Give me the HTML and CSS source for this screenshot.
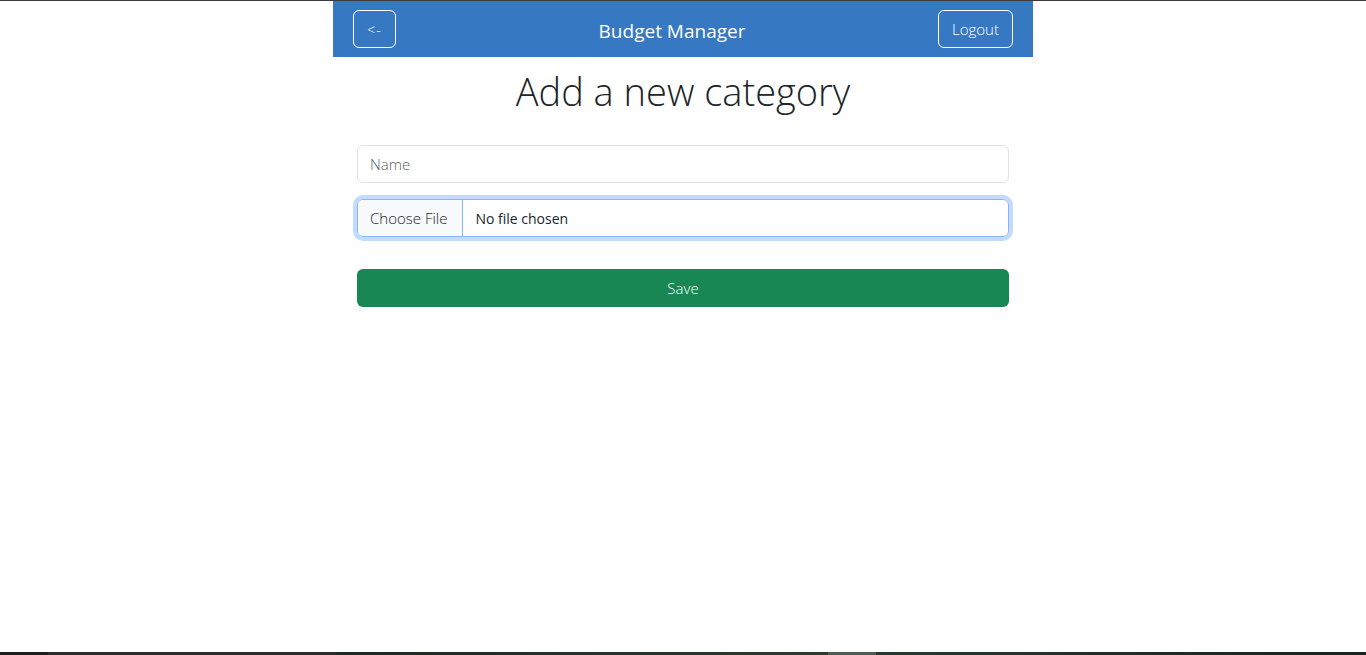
FILE: index.html
```html
<!DOCTYPE html>
<html lang="en">
<head>
<meta charset="utf-8">
<title>Budget Manager</title>
<link rel="stylesheet" href="styles.css">
</head>
<body>
<div class="screen">
  <div class="app">
    <header class="navbar">
      <button class="nav-btn back">&lt;-</button>
      <span class="brand">Budget Manager</span>
      <button class="nav-btn">Logout</button>
    </header>
    <h1 class="title">Add a new category</h1>
    <form class="form">
      <div class="field">
        <span class="placeholder">Name</span>
      </div>
      <div class="field file focused">
        <span class="file-btn">Choose File</span>
        <span class="file-name">No file chosen</span>
      </div>
      <button type="button" class="save">Save</button>
    </form>
  </div>
</div>
<div class="taskbar">
  <span class="tb-a"></span><span class="tb-b"></span><span class="tb-c"></span><span class="tb-d"></span><span class="tb-e"></span>
</div>
</body>
</html>
```
FILE: styles.css
```css
* { box-sizing: border-box; }
html, body { margin: 0; padding: 0; }
body {
  font-family: "Open Sans", "Noto Sans", sans-serif;
  background: #fff;
  color: #212529;
  border-top: 1px solid #3c3c3c;
}
.screen { height: 651px; }
.app {
  width: 700px;
  margin: 0 auto;
}
.navbar {
  height: 56px;
  background: #3778c2;
  display: flex;
  align-items: center;
  justify-content: space-between;
  padding: 0 20px;
}
.nav-btn {
  height: 38px;
  background: transparent;
  border: 1px solid #fff;
  border-radius: 6px;
  color: #fff;
  font-family: "Open Sans", sans-serif;
  font-weight: 300;
  font-size: 15px;
  padding: 0 13px;
}
.nav-btn.back { width: 43px; padding: 0; font-size: 14px; letter-spacing: 1px; }
.brand {
  color: #fff;
  font-size: 19px;
  font-weight: 400;
  margin-left: 10px;
  padding-top: 4px;
}
.title {
  margin: 10px 0 0;
  text-align: center;
  font-size: 38px;
  font-weight: 300;
  line-height: 48px;
  color: #212529;
}
.form {
  padding: 0 24px;
  margin-top: 30px;
  display: flex;
  flex-direction: column;
}
.field {
  height: 38px;
  border: 1px solid #dee2e6;
  border-radius: 6px;
  display: flex;
  align-items: center;
  font-size: 15px;
  font-weight: 300;
}
.placeholder { padding-left: 12px; color: #595c5f; }
.field.file { margin-top: 16px; }
.field.focused {
  border-color: #86b7fe;
  box-shadow: 0 0 0 4px rgba(13, 110, 253, 0.25);
}
.file-btn {
  height: 100%;
  display: flex;
  align-items: center;
  padding: 0 15px 0 12px;
  background: #f8f9fa;
  border-right: 1px solid #86b7fe;
  border-radius: 5px 0 0 5px;
  color: #212529;
}
.file-name { padding-left: 12px; color: #212529; font-weight: 400; font-size: 14px; }
.save {
  margin-top: 32px;
  height: 38px;
  background: #198754;
  border: none;
  border-radius: 6px;
  color: #fff;
  font-family: "Open Sans", sans-serif;
  font-weight: 300;
  font-size: 15px;
}
.taskbar {
  height: 3px;
  display: flex;
}
.taskbar span { height: 3px; }
.tb-a { width: 48px; background: #1e1e1e; }
.tb-b { width: 288px; background: #2e2d2e; }
.tb-c { width: 492px; background: linear-gradient(90deg, #1d2a22, #2f3a30); }
.tb-d { width: 48px; background: #4e5d52; }
.tb-e { flex: 1; background: linear-gradient(90deg, #263a30, #172420); }
```
